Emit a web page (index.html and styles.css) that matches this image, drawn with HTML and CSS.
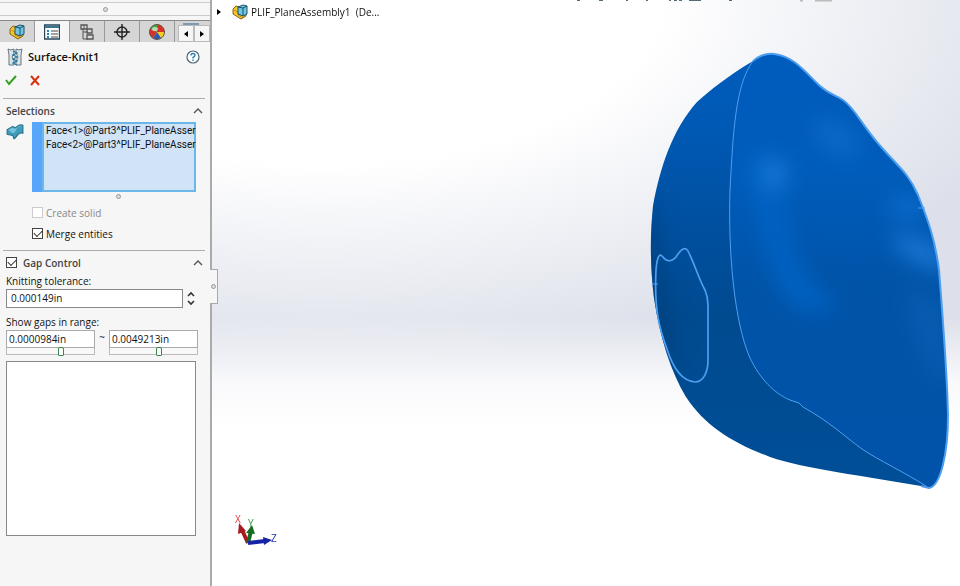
FILE: index.html
```
<!DOCTYPE html>
<html lang="en">
  <head>
    <meta charset="utf-8">
    <title>Surface-Knit1</title>
    <link rel="stylesheet" href="styles.css">
  </head>

  <body>
    <!-- shared icons -->
    <svg class="defs" aria-hidden="true">
      <symbol id="part" viewBox="0 0 16 16">
        <path d="M1 5 4 2l4 1v5l6 2v2l-5 3-8-5z" fill="#f5c52b" stroke="#8a6510"/>
        <path d="m2 6 4 2v3l5 3" fill="none" stroke="#c89116"/>
        <path d="m6 3 5-2 4 1v8l-4 2-5-2z" fill="#72c4e5" stroke="#1b5069"/>
        <path d="m6 3 5 1 4-2M11 4v8" fill="none" stroke="#1b5069"/>
      </symbol>
      <symbol id="up" viewBox="0 0 10 6"><path d="m1 5 4-4 4 4" fill="none" stroke="#555" stroke-width="1.4"/></symbol>
    </svg>

    <div class="app">
      <aside class="panel">
        <div class="splitter"><span class="grip"></span></div>

        <nav class="tabs">
          <button class="tab" aria-label="Feature tree"><svg viewBox="0 0 16 16"><use href="#part"/></svg></button>
          <button class="tab active" aria-label="Properties">
            <svg viewBox="0 0 16 16"><path d="M.5 1h15v14H.5z" fill="#fff" stroke="#24455a" stroke-width="1.4"/><path d="M1 2h14v2H1z" fill="#3f7590"/><path d="M3 6h2v2H3zM3 9h2v2H3zM3 12h2v2H3z" fill="#2481b5"/><path d="M7 7h7M7 10h7M7 13h7" stroke="#444"/></svg>
          </button>
          <button class="tab" aria-label="Configurations">
            <svg viewBox="0 0 16 16"><path d="M2 1h6v4H2zM8 5h5v4H8zM8 11h6v4H8z" fill="#ddd" stroke="#555" stroke-width="1.3"/><path d="M4 5v10h5M4 8h5M5 1v4" fill="none" stroke="#555"/></svg>
          </button>
          <button class="tab" aria-label="Dimensions">
            <svg viewBox="0 0 16 16"><circle cx="8" cy="8" r="5" fill="none" stroke="#222" stroke-width="1.4"/><path d="M8 0v16M0 8h16" stroke="#222" stroke-width="1.4"/></svg>
          </button>
          <button class="tab" aria-label="Appearance">
            <svg viewBox="0 0 16 16"><circle cx="8" cy="8" r="7.5" fill="#f4cc24"/><path d="M8 8 1 5a7.5 7.5 0 0 1 8-4.5z" fill="#42a645"/><path d="M8 8 1 5a7.5 7.5 0 0 0 3 9.3z" fill="#d93129"/><path d="M8 8V.5A7.5 7.5 0 0 1 15.5 8z" fill="#d93129"/><path d="M8 8 4 14.3A7.5 7.5 0 0 0 12 14z" fill="#2b59b8"/><circle cx="8" cy="8" r="7.5" fill="none" stroke="#654"/><ellipse cx="6" cy="5" rx="3" ry="2" fill="#fff" opacity=".6"/></svg>
          </button>
          <div class="tab-more">
            <button class="scroll" aria-label="Previous tabs"><svg viewBox="0 0 4 6"><path d="M4 0v6L0 3z"/></svg></button>
            <button class="scroll" aria-label="Next tabs"><svg viewBox="0 0 4 6"><path d="M0 0v6l4-3z"/></svg></button>
          </div>
        </nav>

        <header class="title">
          <svg class="knit" viewBox="0 0 16 18"><path d="M1 1q3 2 6 0v4L5 9l2 4v4H2V7z" fill="#dce4e8" stroke="#66767e"/><path d="M15 1q-3 2-6 0v4l2 4-2 4v4h5V7z" fill="#dce4e8" stroke="#66767e"/><path d="m6 3 4 2-4 2 4 2-4 2 4 2-4 2 4 2" fill="none" stroke="#2876a0" stroke-width="1.3"/></svg>
          <h1>Surface-Knit1</h1>
          <button class="plain" aria-label="Help">
            <svg class="help" viewBox="0 0 14 14"><circle cx="7" cy="7" r="6" fill="#fff" stroke="#4b6575" stroke-width="1.2"/><path d="M5 5.5Q5 3.5 7 3.5t2 1.8Q9 6.5 7 7.5v1M7 9.5V11" fill="none" stroke="#2881ae" stroke-width="1.4"/></svg>
          </button>
        </header>

        <div class="actions">
          <button class="plain" aria-label="OK"><svg viewBox="0 0 12 12"><path d="m1 6 3 4 7-8" fill="none" stroke="#35a01e" stroke-width="2"/></svg></button>
          <button class="plain" aria-label="Cancel"><svg viewBox="0 0 12 12"><path d="m2 2 8 9M10 2l-8 9" fill="none" stroke="#d5300f" stroke-width="2"/></svg></button>
        </div>

        <section class="group">
          <div class="group-head"><h2>Selections</h2><button class="plain" aria-label="Collapse selections"><svg class="chevron" viewBox="0 0 10 6"><use href="#up"/></svg></button></div>
          <div class="selection">
            <svg class="surface" viewBox="0 0 16 16"><path d="M1 6 6 3q2 2 4 0t5-1v7q-3-1-5 2t-3 3l-1-3-5-1z" fill="#3f9dbb" stroke="#29718a"/><path d="m2 6 4-2q2 2 4 0t4-1q-4 0-5 3t-3 3z" fill="#74c4dc"/></svg>
            <ul class="faces">
              <li>Face&lt;1&gt;@Part3^PLIF_PlaneAsser</li>
              <li>Face&lt;2&gt;@Part3^PLIF_PlaneAsser</li>
            </ul>
          </div>
          <div class="resize"><span class="grip"></span></div>
          <label class="check off"><input type="checkbox" disabled>Create solid</label>
          <label class="check"><input type="checkbox" checked>Merge entities</label>
        </section>

        <section class="group gap">
          <div class="group-head">
            <label class="check head-check"><input type="checkbox" checked>Gap Control</label>
            <button class="plain" aria-label="Collapse gap control"><svg class="chevron" viewBox="0 0 10 6"><use href="#up"/></svg></button>
          </div>
          <label class="caption" for="tolerance">Knitting tolerance:</label>
          <div class="tolerance">
            <input id="tolerance" type="text" value="0.000149in">
            <div class="spinner">
              <button class="plain" aria-label="Increase"><svg viewBox="0 0 10 6"><path d="m2 5 3-3 3 3" fill="none" stroke="#333" stroke-width="1.6"/></svg></button>
              <button class="plain" aria-label="Decrease"><svg viewBox="0 0 10 6"><path d="m2 1 3 3 3-3" fill="none" stroke="#333" stroke-width="1.6"/></svg></button>
            </div>
          </div>
          <div class="caption range-caption">Show gaps in range:</div>
          <div class="range">
            <div class="bound">
              <input type="text" aria-label="Minimum gap" value="0.0000984in">
              <input type="range" aria-label="Minimum gap slider" value="63">
            </div>
            <span class="tilde">~</span>
            <div class="bound">
              <input type="text" aria-label="Maximum gap" value="0.0049213in">
              <input type="range" aria-label="Maximum gap slider" value="57">
            </div>
          </div>
          <div class="gap-list"></div>
        </section>
      </aside>

      <main class="viewport">
        <svg class="scene" viewBox="212 0 748 586" preserveAspectRatio="xMaxYMin meet" role="img" aria-label="Part model">
          <defs>
            <path id="outline" d="M753 61C728 76 710 90 697 102C672 130 660 168 653 206C650 235 650 265 654 298C660 338 671 372 686 397C705 426 733 443 770 457C805 469 865 476 921 486L929 488C941 486 948 452 948 415C947 370 943 320 939 270C935 239 928 220 918 195C909 174 898 166 883 149C862 126 855 108 843 100C835 95 829 94 820 86C806 73 794 56 774 54C765 53 759 56 753 61Z"/>
            <clipPath id="body"><use href="#outline"/></clipPath>
            <linearGradient id="front" x1="0" y1="0" x2="0" y2="1"><stop offset="0" stop-color="#005cbd"/><stop offset=".3" stop-color="#005cba"/><stop offset=".55" stop-color="#0054a8"/><stop offset="1" stop-color="#0053a8"/></linearGradient>
            <linearGradient id="side" x1="0" y1="0" x2="0" y2="1"><stop offset="0" stop-color="#005cbd"/><stop offset=".2" stop-color="#0059b3"/><stop offset=".4" stop-color="#0050a0"/><stop offset=".6" stop-color="#004a90"/><stop offset="1" stop-color="#004f98"/></linearGradient>
            <filter id="soft" filterUnits="userSpaceOnUse" x="600" y="0" width="400" height="560" color-interpolation-filters="sRGB"><feGaussianBlur stdDeviation="11"/></filter>
          </defs>
          <g clip-path="url(#body)">
            <path d="M640 40h320v460H640z" fill="url(#side)"/>
            <path d="M753 61C735 85 733 135 730 190C728 250 734 322 750 358C760 379 775 394 790 400L799 403L803 407C830 422 844 436 862 449C880 461 904 472 926 488H960V40H753Z" fill="url(#front)"/>
            <g filter="url(#soft)">
              <path d="M745 150Q780 150 790 240Q805 290 838 302Q812 325 785 296Q766 270 745 150Z" fill="#0062c3"/>
              <ellipse cx="774" cy="174" rx="12" ry="16" fill="#1a7bdc"/>
              <ellipse cx="836" cy="138" rx="26" ry="14" fill="#0d69c8" transform="rotate(35 836 138)"/>
              <ellipse cx="908" cy="207" rx="20" ry="9" fill="#0e70d2"/>
              <ellipse cx="922" cy="252" rx="32" ry="9" fill="#2280de" transform="rotate(28 922 252)"/>
              <path d="M905 290Q935 285 950 320V390Q918 370 905 290Z" fill="#075bb0"/>
              <path d="M650 180Q662 310 680 385Q650 340 642 260Z" fill="#003f79"/>
            </g>
          </g>
          <g fill="none" stroke="#4d9ff0">
            <path d="M753 61C735 85 733 135 730 190C728 250 734 322 750 358C760 379 775 394 790 400L799 403L803 407C830 422 844 436 862 449C880 461 904 472 926 486"/>
            <path d="M753 61C759 56 765 53 774 54C794 56 806 73 820 86C829 94 835 95 843 100C855 108 862 126 883 149C898 166 909 174 918 195C928 220 935 239 939 270C943 320 947 370 948 415C948 452 941 486 929 488L921 486" stroke-width="2"/>
            <path d="M656 270C657 258 659 253 662 256Q669 265 676 257C681 249 686 245 689 253C697 270 698 277 705 290Q708 297 708 305V360C708 373 703 382 695 382C682 381 673 368 667 349C660 330 654 312 656 270Z" stroke-width="1.7"/>
            <path d="M918 208h7M652 284h6"/>
          </g>
          <path d="M577 0h3M599 0h4M626 0h2M646 0h2M669 0h2M674 0h3M679 0h3M689 0h12M729 0h3" stroke="#536b7b" stroke-width="2"/>
          <path d="M800 0h3M815 0h17" stroke="#bbb" stroke-width="3"/>
          <g class="triad">
            <path d="m248 543-6-13" stroke="#a61b21" stroke-width="4"/><path d="m239 523 7 8-8 3z" fill="#a61b21"/>
            <path d="m248 543 3-12" stroke="#166b22" stroke-width="4"/><path d="m252 525 3 9-9-1z" fill="#166b22"/>
            <path d="m248 543 17-2" stroke="#1723a6" stroke-width="4"/><path d="m272 540-8 5-1-8z" fill="#1723a6"/>
            <text x="235" y="523" fill="#e43b3e">X</text><text x="248" y="527" fill="#329b42">Y</text><text x="271" y="542" fill="#2530c0">Z</text>
          </g>
        </svg>
        <div class="tree">
          <button class="plain" aria-label="Expand tree"><svg class="arrow" viewBox="0 0 4 6"><path d="M0 0v6l4-3z"/></svg></button>
          <svg class="part-icon" viewBox="0 0 16 16"><use href="#part"/></svg>
          <span>PLIF_PlaneAssembly1&nbsp; (De...</span>
        </div>
        <button class="handle" aria-label="Hide panel"><span class="grip"></span></button>
      </main>
    </div>
  </body>
</html>
```
FILE: styles.css
```
* {
  box-sizing: border-box;
}
body {
  margin: 0;
  font: 10px/14px "Open Sans", "Noto Sans", sans-serif;
  color: #111;
}
button, input {
  font: inherit;
  color: inherit;
}
svg {
  display: block;
}
.defs {
  position: absolute;
  width: 0; height: 0;
}
.app {
  display: flex;
  min-height: 100vh;
}

/* property panel */
.panel {
  flex: 0 0 212px;
  min-width: 0;
  background: #f6f6f6;
  border-right: 2px solid #aaa;
}
.splitter {
  display: flex;
  align-items: center;
  justify-content: center;
  height: 14px;
  margin-top: 2px;
  border-top: 1px solid #ccc;
  border-bottom: 1px solid #ccc;
}
.grip {
  width: 5px; height: 5px;
  border: 1px solid #999;
  border-radius: 50%;
  background: #ddd;
}
.plain {
  padding: 0;
  border: 0;
  background: none;
}
.tabs {
  display: flex;
  height: 22px;
  margin-top: 4px;
  border-top: 1px solid #888;
}
.tab {
  display: flex;
  flex: none;
  align-items: center;
  justify-content: center;
  width: 35px;
  padding: 0;
  border: 0;
  border-right: 1px solid #999;
  background: #d5d5d5;
}
.tab svg {
  width: 16px; height: 16px;
}
.tab.active {
  background: #f6f6f6;
}
.tab-more {
  display: flex;
  flex: 1;
  align-items: flex-end;
  justify-content: flex-end;
  background: linear-gradient(#8299a8, #8299a8) no-repeat 8px 2px / 16px 2px #d5d5d5;
}
.scroll {
  display: flex;
  align-items: center;
  justify-content: center;
  width: 16px; height: 17px;
  padding: 0;
  border: 1px solid #bbb;
  background: #f6f6f6;
}
.scroll svg {
  width: 4px; height: 6px;
}
.title {
  display: flex;
  align-items: center;
  height: 30px;
  padding: 0 10px 0 7px;
}
.knit {
  width: 16px; height: 18px;
}
h1 {
  flex: 1;
  margin: 0 0 0 5px;
  font-size: 11px;
  font-weight: 600;
}
.help {
  width: 14px; height: 14px;
}
.actions {
  display: flex;
  align-items: flex-start;
  gap: 12px;
  height: 26px;
  padding: 2px 5px;
}
.actions svg {
  width: 12px; height: 12px;
}
.group {
  margin: 0 5px 0 3px;
  padding: 0 0 0 3px;
  border-top: 1px solid #aaa;
}
.group-head {
  display: flex;
  align-items: center;
  justify-content: space-between;
  height: 23px;
  padding-right: 2px;
}
h2 {
  margin: 0;
  font-size: 10px;
  font-weight: 600;
  color: #444;
}
.chevron {
  width: 10px; height: 6px;
}
.selection {
  display: flex;
  gap: 18px;
  padding-right: 9px;
}
.surface {
  flex: none;
  width: 18px; height: 18px;
  margin-top: 1px;
}
.faces {
  flex: 1;
  min-width: 0;
  height: 70px;
  margin: 0;
  padding: 0 0 0 2px;
  list-style: none;
  font-family: Roboto, "Open Sans", sans-serif;
  white-space: nowrap;
  border: 2px solid #6bb7e8;
  background: #d0e3f7;
  box-shadow: -10px 0 #58a6fb;
}
.resize {
  display: flex;
  justify-content: center;
  height: 10px;
  padding: 2px 0 0 25px;
}
.check {
  display: flex;
  align-items: center;
  gap: 3px;
  height: 21px;
  margin-left: 26px;
}
.check input {
  appearance: none;
  width: 11px; height: 11px;
  margin: 0;
  border: 1px solid #444;
  background: #fff;
}
.check input:checked::before {
  content: '';
  display: block;
  width: 7px; height: 4px;
  margin: 1px;
  border-left: 1px solid #333;
  border-bottom: 1px solid #333;
  transform: rotate(-45deg);
}
.off {
  color: #888;
}
.off input {
  border-color: #ccc;
}
.gap {
  margin-top: 6px;
}
.head-check {
  gap: 6px;
  margin-left: 0;
  font-weight: 600;
  color: #444;
}
.caption {
  display: block;
  height: 15px;
}
.panel input[type=text] {
  width: 100%;
  min-width: 0;
  height: 19px;
  padding: 0 4px 2px;
  border: 1px solid #888;
  background: #fff;
}
.tolerance {
  display: flex;
  gap: 3px;
  padding-right: 9px;
}
.spinner {
  display: flex;
  flex-direction: column;
  justify-content: space-around;
}
.spinner svg {
  width: 10px; height: 6px;
}
.range-caption {
  margin-top: 7px;
}
.range {
  display: flex;
  padding-right: 7px;
}
.bound {
  flex: 1;
}
.range .bound input[type=text] {
  display: block;
  height: 18px;
  padding: 0 2px;
  border-color: #aaa;
}
.bound input[type=range] {
  appearance: none;
  display: block;
  width: 100%;
  height: 7px;
  margin: 0;
  border: 1px solid #bbb;
  border-top: 0;
  background: #f8f8f8;
}
.bound input[type=range]::-webkit-slider-thumb {
  appearance: none;
  width: 6px; height: 9px;
  border: 1px solid #398848;
  border-radius: 2px 2px 1px 1px;
  background: #fff;
}
.tilde {
  width: 14px;
  text-align: center;
}
.gap-list {
  height: 175px;
  margin: 6px 9px 0 0;
  border: 1px solid #888;
  background: #fff;
}

/* graphics area */
.viewport {
  position: relative;
  flex: 1;
  min-width: 0;
  background:
    linear-gradient(transparent 54%, #fffc 65%, #fff 73%),
    radial-gradient(ellipse 100% 62% at 15% 0, #fff 45%, #dde0ea 100%);
}
.scene {
  width: 100%;
}
.triad text {
  font-size: 10px;
}
.tree {
  position: absolute;
  top: 4px; left: 5px;
  display: flex;
  align-items: center;
}
.arrow {
  width: 4px; height: 6px;
}
.part-icon {
  width: 16px; height: 16px;
  margin: 0 3px 0 11px;
}
.handle {
  position: absolute;
  top: 269px; left: -2px;
  display: flex;
  align-items: center;
  justify-content: center;
  width: 8px; height: 35px;
  padding: 0;
  border: 1px solid #aaa;
  border-left: 0;
  background: #f6f6f6;
}
```
